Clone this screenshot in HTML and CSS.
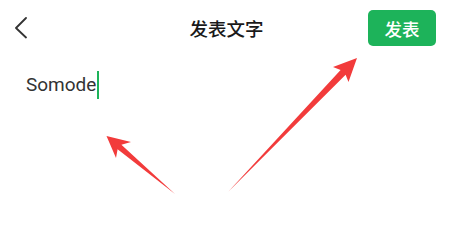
FILE: index.html
```html
<!DOCTYPE html>
<html lang="zh-CN">
<head>
    <meta charset="UTF-8">
    <meta name="viewport" content="width=device-width, initial-scale=1.0">
    <title>发表文字</title>
    <link rel="stylesheet" href="styles.css">
</head>
<body>

    <div class="topbar">
        <button class="back" aria-label="返回">
            <svg width="14" height="24" viewBox="0 0 14 24">
                <polyline points="11,2 1,12 11,21.5" fill="none" stroke="#333" stroke-width="1.8" stroke-linecap="round" stroke-linejoin="round"/>
            </svg>
        </button>
        <h1 class="title">发表文字</h1>
        <button class="publish">发表</button>
    </div>

    <div class="editor">
        <span class="text">Somode</span><span class="cursor"></span>
    </div>

    <svg class="arrows" width="453" height="247" viewBox="0 0 453 247">
        <polygon points="106.5,136 131,142 121.4,144.7 175,194 117.6,149.3 116,158" fill="#f23b3b"/>
        <polygon points="357,58 333,67 340.6,70 228,192 345.6,74.8 348.5,82" fill="#f23b3b"/>
    </svg>

</body>
</html>
```

FILE: styles.css
```css
body {
    margin: 0;
    background-color: #ffffff;
    color: #333333;
    font-family: Roboto, "Noto Sans CJK SC", sans-serif;
    position: relative;
    height: 247px;
    overflow: hidden;
}
.topbar {
    height: 56px;
    display: grid;
    grid-template-columns: 1fr auto 1fr;
    align-items: center;
}
.back {
    justify-self: start;
    margin-left: 15px;
    padding: 0;
    border: none;
    background: none;
    display: flex;
}
.title {
    margin: 0;
    font-family: "Noto Sans CJK SC", sans-serif;
    font-size: 18.5px;
    font-weight: 500;
    color: #1a1a1a;
}
.publish {
    justify-self: end;
    margin-right: 17px;
    width: 68px;
    height: 36px;
    border: none;
    border-radius: 5px;
    background-color: #1db35a;
    color: #ffffff;
    font-family: "Noto Sans CJK SC", sans-serif;
    font-size: 17.5px;
    font-weight: 500;
    padding: 0;
}
.editor {
    padding: 15px 0 0 26px;
    line-height: 28px;
    font-size: 19px;
}
.text {
    color: #333333;
}
.cursor {
    display: inline-block;
    width: 2px;
    height: 28px;
    margin-left: 1px;
    vertical-align: top;
    background-color: #1db35a;
}
.arrows {
    position: absolute;
    left: 0;
    top: 0;
    pointer-events: none;
}
```
